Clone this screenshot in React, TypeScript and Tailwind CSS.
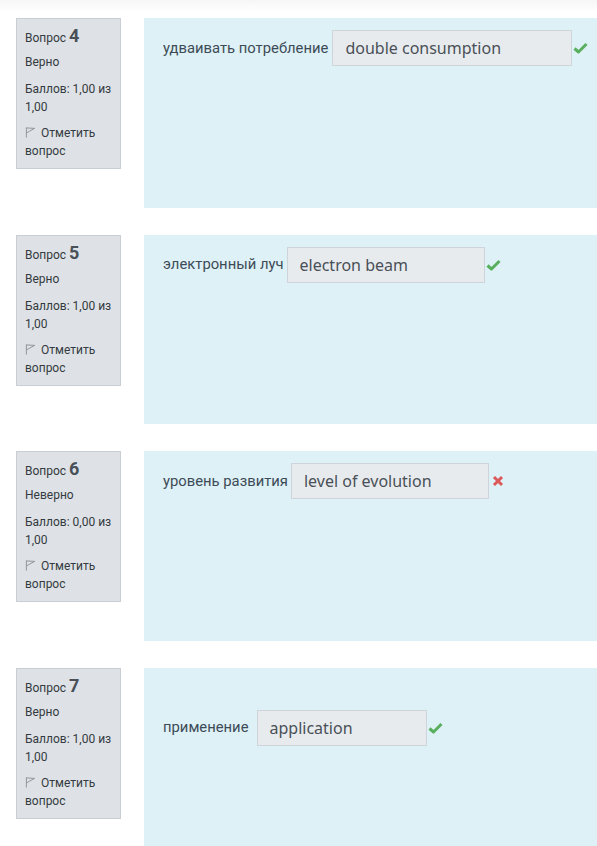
const QUESTIONS = [
  { n: 4, state: "Верно", score: "1,00", label: "удваивать потребление", answer: "double consumption", width: "w-[240px]", ok: true, top: "pt-3", gap: "mr-[4px]" },
  { n: 5, state: "Верно", score: "1,00", label: "электронный луч", answer: "electron beam", width: "w-[198px]", ok: true, top: "pt-3", gap: "mr-[3px]" },
  { n: 6, state: "Неверно", score: "0,00", label: "уровень развития", answer: "level of evolution", width: "w-[198px]", ok: false, top: "pt-3", gap: "mr-[3px]" },
  { n: 7, state: "Верно", score: "1,00", label: "применение", answer: "application", width: "w-[170px]", ok: true, top: "pt-[42px]", gap: "mr-[8px]" },
];

function Flag() {
  return (
    <svg width="11" height="11" viewBox="0 0 12 12" className="mr-[5px] inline-block align-[-1px]" fill="none" stroke="#8a8f94" strokeWidth="1">
      <path d="M1.5 0.5 V11.5" />
      <path d="M1.5 1 L10.5 1.5 L5 4.5 L1.5 6.5" />
    </svg>
  );
}

function Check() {
  return (
    <svg width="15" height="12" viewBox="0 0 15 12" className="ml-[1px]">
      <path d="M1.5 6.5 L5.5 10 L13.5 2" stroke="#5aaf5e" strokeWidth="3" fill="none" strokeLinejoin="round" />
    </svg>
  );
}

function Cross() {
  return (
    <svg width="12" height="12" viewBox="0 0 12 12" className="ml-[3px]">
      <path d="M2 2 L10 10 M10 2 L2 10" stroke="#dc5a5a" strokeWidth="3" fill="none" />
    </svg>
  );
}

export default function App() {
  return (
    <div className="min-h-[846px] bg-white font-['Roboto',sans-serif]">
      <div className="h-[12px] bg-gradient-to-b from-[#f6f6f6] to-white" />
      <div className="flex flex-col gap-[27px] pt-[6px] pl-4">
        {QUESTIONS.map((q) => (
          <div key={q.n} className="flex items-start gap-[23px]">
            <div className="w-[105px] shrink-0 border border-[#c9ced5] bg-[#dee2e6] px-[8px] pt-[8px] pb-[8px] text-[12px] leading-[18px] text-[#343a40]">
              <div className="mb-[6px]">
                Вопрос <span className="text-[18px] font-bold text-[#495057]">{q.n}</span>
              </div>
              <div className="mb-[9px]">{q.state}</div>
              <p className="mb-[8px]">{`Баллов: ${q.score} из 1,00`}</p>
              <p>
                <Flag />
                Отметить вопрос
              </p>
            </div>
            <div className={`h-[189.5px] flex-1 bg-[#def1f7] pl-[19px] ${q.top}`}>
              <div className="flex items-center text-[14.8px] text-[#3d4b56]">
                <span className={q.gap}>{q.label}</span>
                <div className={`flex h-[36px] items-center border border-[#ced4da] bg-[#e8ebee] pl-[12px] font-['Noto_Sans',sans-serif] text-[16px] text-[#495057] ${q.width}`}>
                  {q.answer}
                </div>
                {q.ok ? <Check /> : <Cross />}
              </div>
            </div>
          </div>
        ))}
      </div>
    </div>
  );
}
